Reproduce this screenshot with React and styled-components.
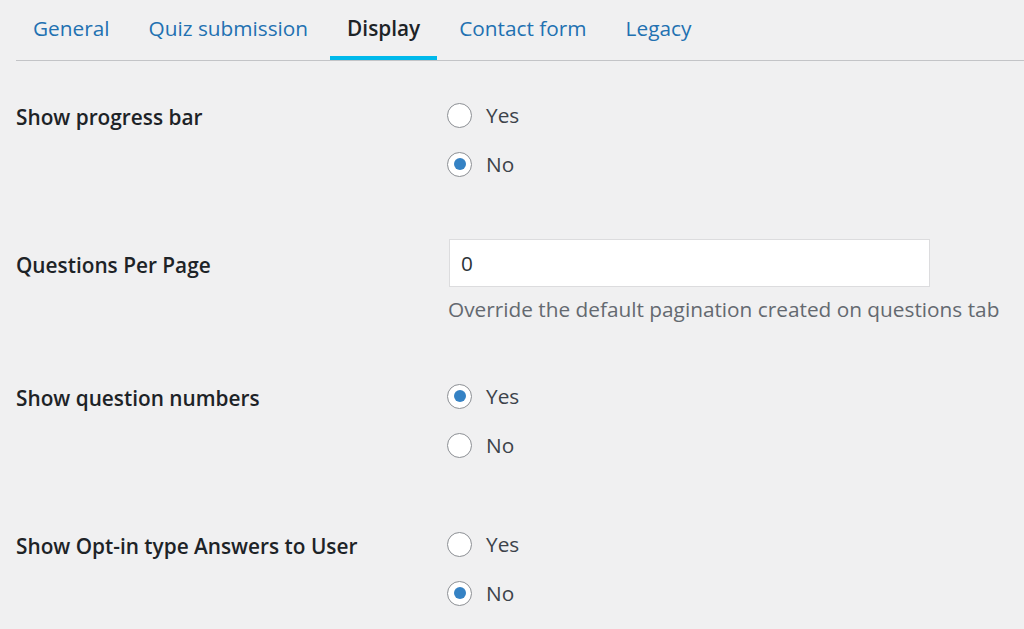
import React from "react";
import styled, { createGlobalStyle } from "styled-components";

const Global = createGlobalStyle`
  html, body { margin: 0; padding: 0; background: #f0f0f1; }
  body { font-family: "Open Sans", "Noto Sans", sans-serif; color: #3c434a; }
`;

const Page = styled.div`
  padding: 0 0 0 16px;
  width: 1008px;
  overflow: hidden;
`;

const Tabs = styled.nav`
  display: flex;
  height: 60px;
  border-bottom: 1px solid #c3c4c7;
  gap: 5px;
`;

const Tab = styled.a`
  display: flex;
  align-items: center;
  padding: 0 17px 4px;
  font-size: 20.8px;
  color: ${(p) => (p.$active ? "#1d2327" : "#2271b1")};
  font-weight: ${(p) => (p.$active ? 600 : 400)};
  text-decoration: none;
  box-shadow: ${(p) => (p.$active ? "inset 0 -4px 0 #00b9eb" : "none")};
`;

const Row = styled.div`
  display: grid;
  grid-template-columns: 431px 1fr;
  padding: 30px 0 ${(p) => p.$bottom}px;
`;

const Label = styled.div`
  padding-top: 11px;
  font-size: 20.8px;
  line-height: 30px;
  font-weight: 600;
  color: #1d2327;
  white-space: nowrap;
`;

const Options = styled.div`
  display: flex;
  flex-direction: column;
  gap: 19px;
  padding-top: 9px;
`;

const Option = styled.label`
  display: flex;
  align-items: center;
  height: 30px;
  gap: 14px;
  font-size: 20.8px;
  color: #3c434a;
`;

const Radio = styled.span`
  width: 25px;
  height: 25px;
  border-radius: 50%;
  border: 1px solid #8c8f94;
  background: #fff;
  box-sizing: border-box;
  display: flex;
  align-items: center;
  justify-content: center;
  &::after {
    content: "";
    width: 12px;
    height: 12px;
    border-radius: 50%;
    background: ${(p) => (p.$checked ? "#3582c4" : "transparent")};
  }
`;

const Input = styled.div`
  width: 481px;
  height: 48px;
  box-sizing: border-box;
  margin-left: 2px;
  background: #fff;
  border: 1px solid #dcdcde;
  display: flex;
  align-items: center;
  padding-left: 11px;
  font-size: 20.8px;
  color: #2c3338;
`;

const Desc = styled.p`
  margin: 7px 0 0 1px;
  font-size: 20.8px;
  line-height: 30px;
  color: #646970;
  white-space: nowrap;
`;

const RadioRow = ({ label, value }) => (
  <Row $bottom={30}>
    <Label>{label}</Label>
    <Options>
      {["Yes", "No"].map((o) => (
        <Option key={o}>
          <Radio $checked={value === o} />
          {o}
        </Option>
      ))}
    </Options>
  </Row>
);

export default function App() {
  return (
    <>
      <Global />
      <Page>
        <Tabs>
          <Tab>General</Tab>
          <Tab>Quiz submission</Tab>
          <Tab $active>Display</Tab>
          <Tab>Contact form</Tab>
          <Tab>Legacy</Tab>
        </Tabs>
        <RadioRow label="Show progress bar" value="No" />
        <Row $bottom={18}>
          <Label>Questions Per Page</Label>
          <div>
            <Input>0</Input>
            <Desc>Override the default pagination created on questions tab</Desc>
          </div>
        </Row>
        <RadioRow label="Show question numbers" value="Yes" />
        <RadioRow label="Show Opt-in type Answers to User" value="No" />
      </Page>
    </>
  );
}
